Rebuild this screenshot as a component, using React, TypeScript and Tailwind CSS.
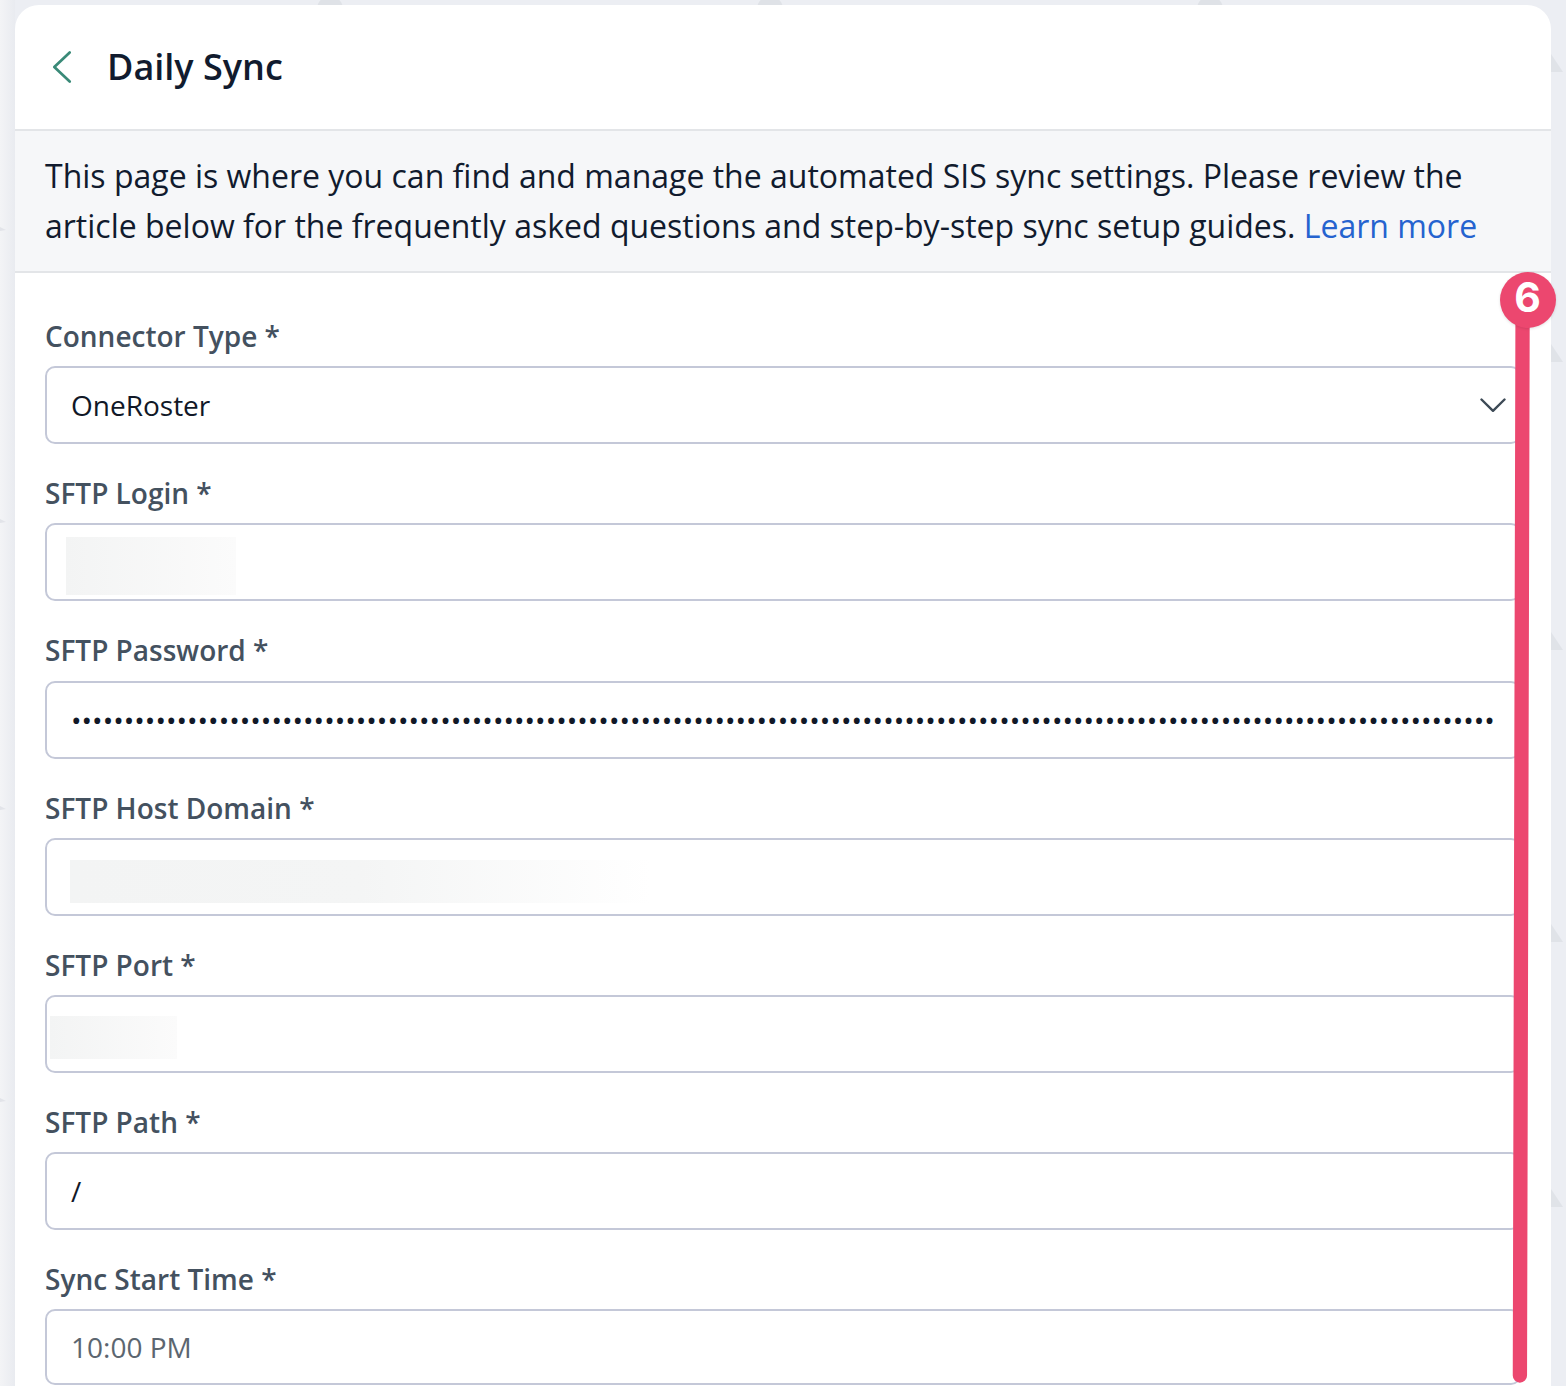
import React from "react";

const font = { fontFamily: '"Open Sans", sans-serif' };

function Label({ children }: { children: React.ReactNode }) {
  return <div className="h-[79.2px] pt-[30px] text-[28px] leading-[38px] font-semibold text-[#44515f]">{children}</div>;
}

function Field({ children, short }: { children?: React.ReactNode; short?: boolean }) {
  return (
    <div
      className={
        (short ? "h-[76px] " : "h-[78px] ") +
        "relative flex items-center pl-[24px] pr-[24px] bg-white border-2 border-[#c4c8d8] rounded-[10px] text-[28px] text-[#111827] overflow-hidden whitespace-nowrap"
      }
    >
      {children}
    </div>
  );
}

function Blur({ className }: { className: string }) {
  return <div className={"absolute bg-gradient-to-r from-[#f3f4f4] to-[#fbfbfb] " + className} />;
}

function Backdrop() {
  const tops = [330, 770, 1210];
  const tris = [72, 362, 650, 942, 1207];
  const marks = [230, 522, 809, 1101];
  return (
    <svg width="1566" height="1386" viewBox="0 0 1566 1386" fill="none" className="absolute left-0 top-0">
      {tops.map((x) => (
        <circle key={x} cx={x} cy="9" r="13" fill="#dfe2e7" />
      ))}
      {tris.map((y) => (
        <path key={y} d={`M1551 ${y - 18} L1563 ${y} L1551 ${y} Z`} fill="#e0e3e8" />
      ))}
      {marks.map((y) => (
        <path key={y} d={`M0 ${y - 3} L6 ${y} L0 ${y + 1} Z`} fill="#e2e4e9" />
      ))}
    </svg>
  );
}

export default function App() {
  return (
    <div style={font} className="relative h-[1386px] overflow-hidden bg-[#eceef3] pt-[5px] pl-[15px] pr-[15px]">
      <div className="absolute left-0 top-0 w-[15px] h-full bg-gradient-to-r from-[#f3f4f6] to-[#e9ebf0]" />
      <Backdrop />
      <div className="relative bg-white rounded-t-[24px] h-[1381px] overflow-hidden">
        <div className="h-[126px] flex items-center pl-[36px] border-b-2 border-[#e3e5e8]">
          <svg width="22" height="34" viewBox="0 0 22 34" fill="none" className="mr-[34px]">
            <path d="M18.7 2.5 L3.3 17 L18.7 31.5" stroke="#3a8a78" strokeWidth="2.7" strokeLinecap="round" strokeLinejoin="round" />
          </svg>
          <h1 className="text-[36px] leading-[48px] font-semibold text-[#111b2e] -mt-[1px]">Daily Sync</h1>
        </div>
        <div className="h-[142px] bg-[#f6f7f9] border-b-2 border-[#e3e5e8] pl-[30px] pt-[20px] text-[32px] leading-[50px] text-[#111b2e]">
          <p className="whitespace-nowrap">This page is where you can find and manage the automated SIS sync settings. Please review the</p>
          <p className="whitespace-nowrap">
            article below for the frequently asked questions and step-by-step sync setup guides.{" "}
            <a className="text-[#2563cf]">Learn more</a>
          </p>
        </div>
        <div className="pl-[30px] pr-[30px] pt-[14px]">
          <Label>Connector Type *</Label>
          <Field>
            <span>OneRoster</span>
            <svg width="26" height="15" viewBox="0 0 26 15" fill="none" className="absolute right-[13.5px] top-[29.5px]">
              <path d="M1.5 1.5 L13 12.8 L24.5 1.5" stroke="#3d4a56" strokeWidth="2.4" strokeLinecap="round" strokeLinejoin="round" />
            </svg>
          </Field>
          <Label>SFTP Login *</Label>
          <Field>
            <Blur className="left-[19px] top-[12px] w-[170px] h-[58px]" />
          </Field>
          <Label>SFTP Password *</Label>
          <Field>
            <span className="tracking-[0.02px] text-[#111827]">{"•".repeat(135)}</span>
          </Field>
          <Label>SFTP Host Domain *</Label>
          <Field>
            <div className="absolute left-[23px] top-[20px] w-[580px] h-[43px] bg-gradient-to-r from-[#f3f4f4] via-[#f4f5f5] to-white" />
          </Field>
          <Label>SFTP Port *</Label>
          <Field>
            <Blur className="left-[3px] top-[19px] w-[127px] h-[43px]" />
          </Field>
          <Label>SFTP Path *</Label>
          <Field>/</Field>
          <Label>Sync Start Time *</Label>
          <Field short>
            <span className="text-[#5c6670]">10:00 PM</span>
          </Field>
        </div>
      </div>
      <svg width="1566" height="1386" viewBox="0 0 1566 1386" fill="none" className="absolute left-0 top-0">
        <path d="M1522.6 300 L1519.9 1375.5" stroke="#ec476f" strokeWidth="14.3" strokeLinecap="round" />
      </svg>
      <div
        className="absolute left-[1499.5px] top-[271.5px] w-[56px] h-[56px] pb-[3px] rounded-full bg-[#ec476f] text-white flex items-center justify-center text-[41px] font-bold shadow-[0_1px_3px_rgba(0,0,0,0.12)]"
        style={{ fontFamily: '"Inter", sans-serif' }}
      >
        6
      </div>
    </div>
  );
}
